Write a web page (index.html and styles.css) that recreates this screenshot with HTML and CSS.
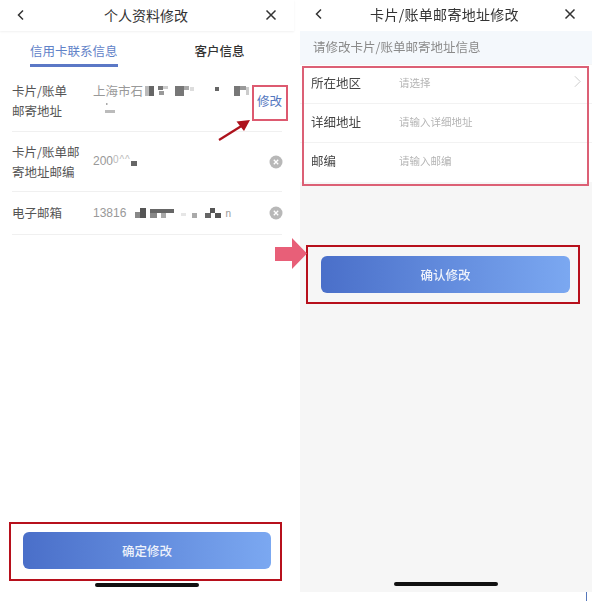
FILE: index.html
```html
<!DOCTYPE html>
<html lang="zh-CN">
<head>
<meta charset="utf-8">
<title>个人资料修改</title>
<link rel="stylesheet" href="styles.css">
</head>
<body>
<div class="stage">
  <section class="panel panel-left">
    <header class="nav">
      <svg class="nav-icon" viewBox="0 0 12 12"><path d="M8 1.500 3.500 6 8 10.500"/></svg>
      <h1 class="nav-title">个人资料修改</h1>
      <svg class="nav-icon" viewBox="0 0 12 12"><path d="M1.500 1.500l9 9M10.500 1.500l-9 9"/></svg>
    </header>
    <nav class="tabs">
      <div class="tab tab-active">信用卡联系信息</div>
      <div class="tab">客户信息</div>
    </nav>
    <div class="info-list">
      <div class="info-row info-row-1">
        <div class="info-label">卡片/账单<br>邮寄地址</div>
        <div class="info-value">
          <div class="value-line">上海市石<svg class="mosaic mosaic-a" viewBox="0 0 106 12"><rect x="1" y="1" width="4" height="10" fill="#bbb"/><rect x="5" y="1" width="5" height="10" fill="#666"/><rect x="14" y="1" width="5" height="4" fill="#777"/><rect x="19" y="1" width="5" height="3" fill="#ccc"/><rect x="15" y="6" width="5" height="4" fill="#999"/><rect x="31" y="1" width="9" height="10" fill="#777"/><rect x="40" y="1" width="5" height="4" fill="#aaa"/><rect x="46" y="2" width="4" height="4" fill="#ddd"/><rect x="71" y="2" width="4" height="4" fill="#666"/><rect x="90" y="1" width="6" height="10" fill="#777"/><rect x="96" y="1" width="6" height="4" fill="#999"/><rect x="102" y="2" width="3" height="8" fill="#ccc"/></svg></div>
          <svg class="mosaic mosaic-b" viewBox="0 0 12 12"><rect x="1" y="0" width="1.500" height="2" fill="#aaa"/><rect x="0" y="7" width="10" height="3" fill="#bbb"/></svg>
        </div>
        <div class="edit-link">修改</div>
      </div>
      <div class="info-row info-row-2">
        <div class="info-label">卡片/账单邮<br>寄地址邮编</div>
        <div class="info-value"><div class="value-line value-latin">200<span class="value-faint">0^^</span><svg class="mosaic mosaic-c" viewBox="0 0 8 10"><rect x="1" y="4" width="6" height="5" fill="#666"/></svg></div></div>
        <svg class="clear-icon" viewBox="0 0 14 14"><circle cx="7" cy="7" r="6.500"/><path d="M4.800 4.800l4.400 4.400M9.200 4.800l-4.400 4.400"/></svg>
      </div>
      <div class="info-row info-row-3">
        <div class="info-label">电子邮箱</div>
        <div class="info-value"><div class="value-line value-latin">13816<svg class="mosaic mosaic-d" viewBox="0 0 86 12"><rect x="0" y="5" width="5" height="6" fill="#888"/><rect x="5" y="1" width="6" height="10" fill="#555"/><rect x="15" y="2" width="24" height="4" fill="#666"/><rect x="15" y="6" width="7" height="5" fill="#888"/><rect x="26" y="6" width="5" height="5" fill="#aaa"/><rect x="46" y="6" width="5" height="3" fill="#e6e6e6"/><rect x="57" y="6" width="5" height="5" fill="#aaa"/><rect x="70" y="6" width="6" height="5" fill="#666"/><rect x="75" y="1" width="5" height="5" fill="#555"/><rect x="80" y="6" width="6" height="5" fill="#555"/></svg><span class="value-tail">n</span></div></div>
        <svg class="clear-icon" viewBox="0 0 14 14"><circle cx="7" cy="7" r="6.500"/><path d="M4.800 4.800l4.400 4.400M9.200 4.800l-4.400 4.400"/></svg>
      </div>
    </div>
    <div class="footer-left">
      <button class="primary-btn" type="button">确定修改</button>
    </div>
    <div class="home-bar"></div>
  </section>

  <section class="panel panel-right">
    <header class="nav nav-right">
      <svg class="nav-icon" viewBox="0 0 12 12"><path d="M8 1.500 3.500 6 8 10.500"/></svg>
      <h1 class="nav-title">卡片/账单邮寄地址修改</h1>
      <svg class="nav-icon" viewBox="0 0 12 12"><path d="M1.500 1.500l9 9M10.500 1.500l-9 9"/></svg>
    </header>
    <div class="form-hint">请修改卡片/账单邮寄地址信息</div>
    <div class="form">
      <div class="form-row">
        <div class="form-label">所在地区</div>
        <div class="form-placeholder">请选择</div>
        <svg class="chevron" viewBox="0 0 8 14"><path d="M1 1l6 6-6 6"/></svg>
      </div>
      <div class="form-row">
        <div class="form-label">详细地址</div>
        <div class="form-placeholder">请输入详细地址</div>
      </div>
      <div class="form-row">
        <div class="form-label">邮编</div>
        <div class="form-placeholder">请输入邮编</div>
      </div>
    </div>
    <div class="footer-right">
      <button class="primary-btn" type="button">确认修改</button>
    </div>
    <div class="home-bar"></div>
  </section>

  <!-- red annotations laid over the two screens -->
  <div class="mark mark-edit"></div>
  <div class="mark mark-form"></div>
  <div class="mark mark-btn-left"></div>
  <div class="mark mark-btn-right"></div>
  <svg class="overlay-arrow arrow-edit" viewBox="0 0 36 24"><path d="M2 22 26 7" stroke="#ad121c" stroke-width="2.200" fill="none"/><path d="M33 2 19.500 3.500 23 8 27 13z" fill="#ad121c"/></svg>
  <svg class="overlay-arrow arrow-next" viewBox="0 0 32 31"><path d="M0 9h17V0l15 15.500L17 31v-8H0z" fill="#e85f78"/></svg>
  <div class="edge-tick"></div>
</div>
</body>
</html>
```
FILE: styles.css
```css
* { box-sizing: border-box; }
html, body { margin: 0; padding: 0; background: #fff; }
body {
  width: 596px;
  height: 601px;
  overflow: hidden;
  font-family: "Noto Sans CJK SC", "Liberation Sans", sans-serif;
}
.stage {
  position: relative;
  width: 596px;
  height: 601px;
  display: flex;
  gap: 6px;
  filter: blur(0.35px);
}
.panel {
  position: relative;
  display: flex;
  flex-direction: column;
  height: 592px;
}
.panel-left { width: 294px; background: #fff; }
.panel-right { width: 292px; background: #f6f6f6; }

.nav {
  height: 31px;
  flex: none;
  display: flex;
  align-items: center;
  justify-content: space-between;
  padding: 0 17px 2px 15px;
  background: #fff;
  box-shadow: 0 1px 2px rgba(0, 0, 0, 0.06);
}
.nav-right { padding: 0 16px 3px 13px; box-shadow: none; }
.nav-icon {
  width: 12px;
  height: 12px;
  flex: none;
  fill: none;
  stroke: #333;
  stroke-width: 1.500;
}
.nav-title {
  margin: 0;
  font-size: 14px;
  font-weight: 400;
  color: #333;
  line-height: 20px;
  white-space: nowrap;
}
.nav-right .nav-title { letter-spacing: 0.300px; }

.tabs {
  display: flex;
  height: 39px;
  flex: none;
  padding-left: 30px;
  gap: 77px;
}
.tab {
  height: 36px;
  padding-top: 11px;
  font-size: 12.500px;
  line-height: 18px;
  font-weight: 500;
  color: #333;
  white-space: nowrap;
}
.tab-active {
  color: #5f82c8;
  font-weight: 400;
  border-bottom: 3px solid #5b78c6;
}

.info-list { padding: 0 12px; flex: none; }
.info-row {
  display: flex;
  align-items: center;
  position: relative;
  border-bottom: 1px solid #f0f0f0;
}
.info-row-1 { height: 62px; }
.info-row-2 { height: 60px; }
.info-row-3 { height: 43px; }
.info-label {
  width: 81px;
  flex: none;
  font-size: 12.500px;
  line-height: 20px;
  color: #555;
}
.info-value {
  flex: 1;
  min-width: 0;
  font-size: 12.500px;
  color: #999;
}
.info-row-1 .info-value { padding-bottom: 4px; }
.value-line {
  display: flex;
  align-items: center;
  line-height: 17px;
  white-space: nowrap;
}
.value-latin { font-family: "Liberation Sans", sans-serif; font-size: 12px; }
.value-faint { color: #bbb; font-size: 10px; margin-top: -5px; letter-spacing: 0.800px; }
.value-tail { margin-left: 4px; font-size: 10px; }
.mosaic { display: block; flex: none; }
.mosaic-a { width: 106px; height: 12px; margin-left: 1px; }
.mosaic-b { width: 12px; height: 12px; margin: 4px 0 0 12px; }
.mosaic-c { width: 8px; height: 10px; margin-left: 0; }
.mosaic-d { width: 86px; height: 12px; margin-left: 9px; }
.edit-link {
  flex: none;
  font-size: 12.500px;
  line-height: 18px;
  color: #5578bf;
  white-space: nowrap;
}
.clear-icon { width: 14px; height: 14px; flex: none; margin-right: -1px; }
.clear-icon circle { fill: #b8b8b8; }
.clear-icon path { stroke: #fff; stroke-width: 1.300; fill: none; }

.primary-btn {
  display: block;
  height: 37px;
  border: 0;
  border-radius: 6px;
  background: linear-gradient(90deg, #4a6fc9, #7ba8f1);
  color: #eef2fb;
  font: 500 12.500px/37px "Noto Sans CJK SC", sans-serif;
  padding: 0;
}
.footer-left { margin-top: auto; padding: 0 23px 23px; }
.footer-left .primary-btn { width: 248px; }
.footer-right { padding: 74px 0 0 21px; }
.footer-right .primary-btn { width: 249px; }

.form-hint {
  height: 33px;
  flex: none;
  padding: 7px 0 0 13px;
  font-size: 12.500px;
  line-height: 18px;
  color: #8a8a8a;
  background: #f4f8fc;
  white-space: nowrap;
}
.form { background: #fff; margin: 1px 0 0; flex: none; }
.form-row {
  height: 39px;
  display: flex;
  align-items: center;
  padding: 0 11px 4px 11px;
  border-bottom: 1px solid #f2f2f2;
  position: relative;
}
.form-row:last-child { border-bottom: 0; }
.form-label {
  width: 88px;
  flex: none;
  font-size: 12.500px;
  color: #444;
}
.form-placeholder {
  flex: 1;
  font-size: 10.500px;
  color: #b4b4b4;
}
.chevron {
  width: 7px;
  height: 13px;
  flex: none;
  margin-top: -2px;
  fill: none;
  stroke: #c6c6c6;
  stroke-width: 1;
}

.home-bar {
  position: absolute;
  left: 95px;
  top: 583px;
  width: 104px;
  height: 3.500px;
  border-radius: 2px;
  background: #111;
}
.panel-right .home-bar { left: 94px; top: 582px; }

.mark { position: absolute; }
.mark-edit { left: 252px; top: 85px; width: 36px; height: 36px; border: 2.500px solid #dd5a70; }
.mark-form { left: 302px; top: 66px; width: 287px; height: 120px; border: 2.500px solid #dc6075; }
.mark-btn-left { left: 9px; top: 522px; width: 273px; height: 59px; border: 2.500px solid #b7101c; }
.mark-btn-right { left: 306px; top: 245px; width: 274px; height: 59px; border: 2.500px solid #b7101c; }
.overlay-arrow { position: absolute; display: block; }
.arrow-edit { left: 217px; top: 118px; width: 36px; height: 24px; }
.arrow-next { left: 275px; top: 238px; width: 32px; height: 31px; }
.edge-tick { position: absolute; left: 586px; top: 592px; width: 1px; height: 9px; background: #5577bb; }
```
